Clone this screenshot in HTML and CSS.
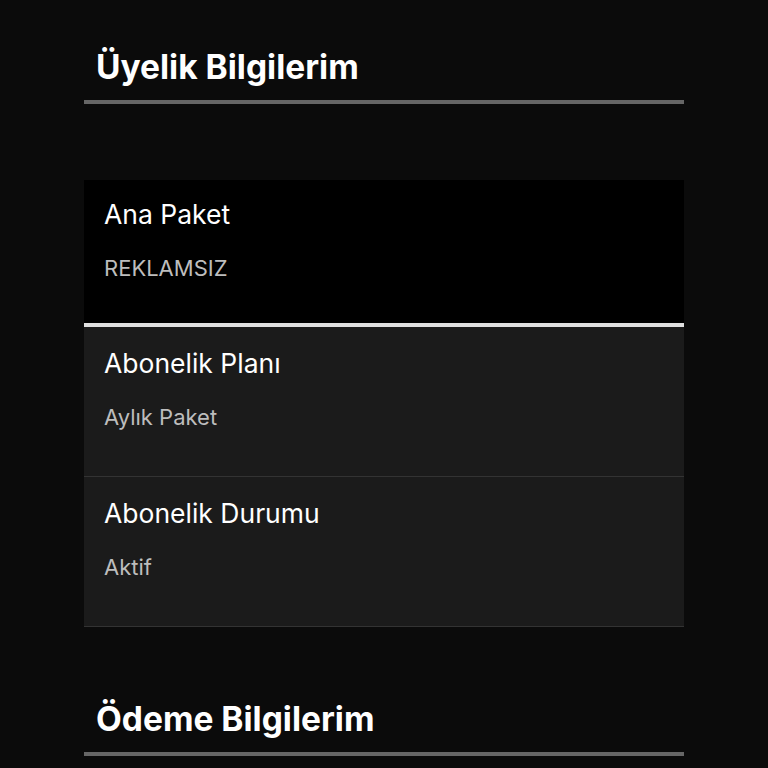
FILE: index.html
```html
<!DOCTYPE html>
<html lang="tr">
<head>
<meta charset="utf-8">
<link rel="stylesheet" href="styles.css">
</head>
<body>
<main class="page">
  <section class="section">
    <h2 class="section-title">Üyelik Bilgilerim</h2>
    <div class="cards">
      <div class="card card-active">
        <div class="card-title">Ana Paket</div>
        <div class="card-value">REKLAMSIZ</div>
      </div>
      <div class="card">
        <div class="card-title">Abonelik Planı</div>
        <div class="card-value">Aylık Paket</div>
      </div>
      <div class="card">
        <div class="card-title">Abonelik Durumu</div>
        <div class="card-value">Aktif</div>
      </div>
    </div>
  </section>
  <section class="section">
    <h2 class="section-title">Ödeme Bilgilerim</h2>
  </section>
</main>
</body>
</html>
```
FILE: styles.css
```css
html, body {
  margin: 0;
  padding: 0;
  background: #0b0b0b;
  color: #fff;
}
.page {
  width: 600px;
  margin: 0 auto;
  padding-top: 46px;
}
.section-title {
  margin: 0;
  padding: 0 12px 12px;
  font-family: Inter, "Liberation Sans", sans-serif;
  font-weight: 700;
  font-size: 33.5px;
  line-height: 42px;
  border-bottom: 4px solid #666;
  color: #fff;
}
.cards {
  margin-top: 76px;
  margin-bottom: 71px;
  display: flex;
  flex-direction: column;
}
.card {
  background: #1b1b1b;
  padding: 20px 20px 0;
  height: 129px;
  border-bottom: 1px solid #333;
  font-family: Inter, "Noto Sans", sans-serif;
}
.card-active {
  background: #000;
  padding-top: 18px;
  height: 125px;
  border-bottom: 4px solid #e0e0e0;
}
.card-title {
  font-size: 26.5px;
  line-height: 32px;
  color: #fff;
}
.card-value {
  margin-top: 24px;
  font-size: 22px;
  line-height: 28px;
  color: #bdbdbd;
}
```
